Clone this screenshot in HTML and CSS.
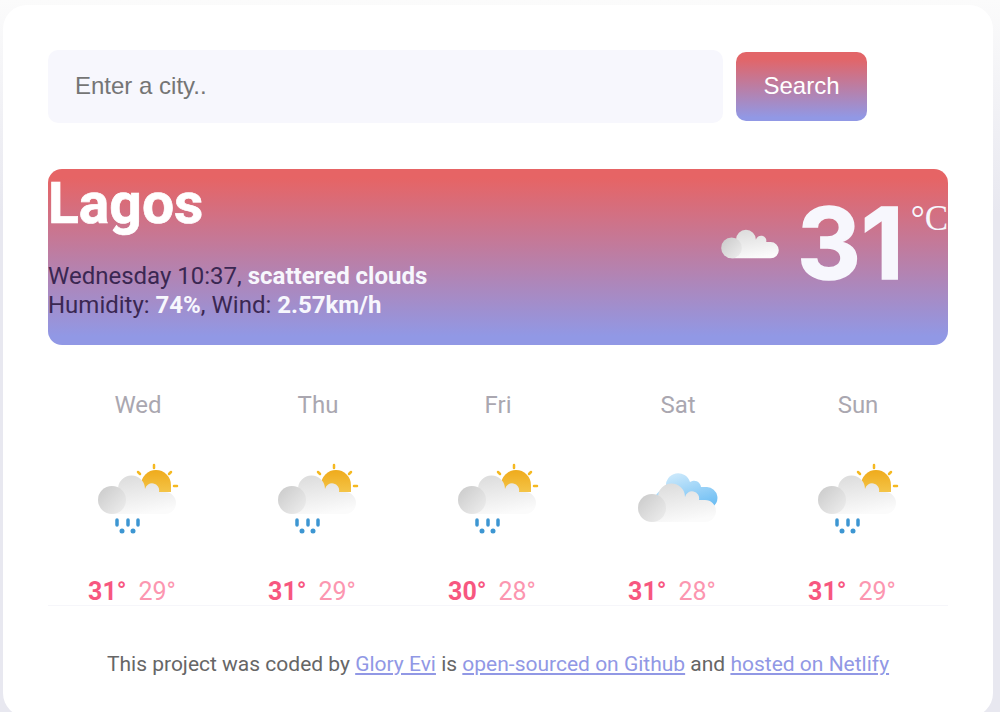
FILE: index.html
```html
<!DOCTYPE html>
<html lang="en">
<head>
<meta charset="utf-8">
<title>Weather</title>
<link rel="stylesheet" href="styles.css">
</head>
<body>
<svg class="defs" width="0" height="0" aria-hidden="true">
  <defs>
    <linearGradient id="cloudFill" x1="0.2" y1="0" x2="0.5" y2="1">
      <stop offset="0" stop-color="#dcdcdc"/><stop offset="1" stop-color="#fbfbfb"/>
    </linearGradient>
    <linearGradient id="puffFill" x1="0" y1="0" x2="1" y2="1">
      <stop offset="0" stop-color="#c9c9c9"/><stop offset="1" stop-color="#efefef"/>
    </linearGradient>
    <linearGradient id="sunFill" x1="0" y1="0" x2="0" y2="1">
      <stop offset="0" stop-color="#efab1c"/><stop offset="1" stop-color="#f4c447"/>
    </linearGradient>
    <linearGradient id="skyFill" x1="0.2" y1="0" x2="0.8" y2="1">
      <stop offset="0" stop-color="#d3ecfc"/><stop offset="1" stop-color="#6cbdf3"/>
    </linearGradient>
    <symbol id="cloud" viewBox="0 10 84 44">
      <path d="M17 52H70A11 11 0 0 0 70 30H64A7 7 0 0 0 50 27A13.500 13.500 0 0 0 23 27L17 52Z" fill="url(#cloudFill)"/>
      <circle cx="17" cy="38" r="14" fill="url(#puffFill)"/>
    </symbol>
    <symbol id="rainy" viewBox="0 0 84 76">
      <g stroke="#f5b921" stroke-width="2.500" stroke-linecap="round">
        <path d="M59 3V6"/><path d="M43 10L45 12"/><path d="M76 10L74 12"/><path d="M79 24H82"/>
      </g>
      <path d="M46 23A15 15 0 0 1 76 23V30H46Z" fill="url(#sunFill)"/>
      <path d="M17 52H70A11 11 0 0 0 70 30H64A7 7 0 0 0 50 27A13.500 13.500 0 0 0 23 27L17 52Z" fill="url(#cloudFill)"/>
      <circle cx="17" cy="38" r="14" fill="url(#puffFill)"/>
      <g stroke="#3d96d2" stroke-width="3.500" stroke-linecap="round">
        <path d="M22 58V63"/><path d="M33 58V63"/><path d="M43 58V63"/>
      </g>
      <circle cx="27" cy="69" r="2.500" fill="#3d96d2"/><circle cx="38" cy="69" r="2.500" fill="#3d96d2"/>
    </symbol>
    <symbol id="overcast" viewBox="0 0 84 76">
      <path d="M17 44C18 34 24 28 31 25A12.300 12.300 0 0 1 55 20A7 7 0 0 1 66 25H72A11 11 0 0 1 76 46Z" fill="url(#skyFill)"/>
      <g transform="translate(0 8)">
        <path d="M17 52H70A11 11 0 0 0 70 30H64A7 7 0 0 0 50 27A13.500 13.500 0 0 0 23 27L17 52Z" fill="url(#cloudFill)"/>
        <circle cx="17" cy="38" r="14" fill="url(#puffFill)"/>
      </g>
    </symbol>
  </defs>
</svg>
<main class="card">
  <form class="search">
    <input class="search-input" type="text" placeholder="Enter a city..">
    <button class="search-button" type="button">Search</button>
  </form>
  <section class="current">
    <div class="place">
      <h1 class="city">Lagos</h1>
      <p class="details">Wednesday 10:37, <strong>scattered clouds</strong><br>Humidity: <strong>74%</strong>, Wind: <strong>2.57km/h</strong></p>
    </div>
    <div class="reading">
      <svg class="now-icon"><use href="#cloud"/></svg>
      <span class="temp">31</span>
      <span class="unit">°C</span>
    </div>
  </section>
  <section class="forecast">
    <div class="day">
      <div class="day-name">Wed</div>
      <svg class="day-icon"><use href="#rainy"/></svg>
      <div class="temps"><strong class="high">31°</strong><span class="low">29°</span></div>
    </div>
    <div class="day">
      <div class="day-name">Thu</div>
      <svg class="day-icon"><use href="#rainy"/></svg>
      <div class="temps"><strong class="high">31°</strong><span class="low">29°</span></div>
    </div>
    <div class="day">
      <div class="day-name">Fri</div>
      <svg class="day-icon"><use href="#rainy"/></svg>
      <div class="temps"><strong class="high">30°</strong><span class="low">28°</span></div>
    </div>
    <div class="day">
      <div class="day-name">Sat</div>
      <svg class="day-icon"><use href="#overcast"/></svg>
      <div class="temps"><strong class="high">31°</strong><span class="low">28°</span></div>
    </div>
    <div class="day">
      <div class="day-name">Sun</div>
      <svg class="day-icon"><use href="#rainy"/></svg>
      <div class="temps"><strong class="high">31°</strong><span class="low">29°</span></div>
    </div>
  </section>
  <footer class="credits">This project was coded by <a href="#">Glory Evi</a> is <a href="#">open-sourced on Github</a> and <a href="#">hosted on Netlify</a></footer>
</main>
</body>
</html>
```
FILE: styles.css
```css
* { box-sizing: border-box; }
html, body { height: 712px; overflow: hidden; }
body {
  margin: 0;
  padding: 5px 7px 0 3px;
  font-family: Roboto, sans-serif;
  background: linear-gradient(180deg, #fbfbfb 0%, #e8e8f0 30%, #e8e8f0 100%);
}
.defs { position: absolute; }
.card {
  width: 990px;
  height: 712px;
  padding: 45px;
  background: #fff;
  border-radius: 24px;
}
.search { display: flex; align-items: center; gap: 13px; height: 73px; }
.search-input {
  width: 675px;
  height: 73px;
  padding: 0 27px 2px;
  border: 0;
  border-radius: 10px;
  background: #f7f7fd;
  font: 24px "Liberation Sans", sans-serif;
  outline: none;
}
.search-input::placeholder { color: #757575; opacity: 1; }
.search-button {
  width: 131px;
  height: 69px;
  padding: 0 0 2px;
  border: 0;
  border-radius: 10px;
  color: #fff;
  background: linear-gradient(180deg, #e26568 10%, #9198e5 95%);
  font: 24px "Liberation Sans", sans-serif;
}
.current {
  display: flex;
  justify-content: space-between;
  width: 900px;
  height: 176px;
  margin-top: 46px;
  border-radius: 14px;
  background: linear-gradient(180deg, #e66465 5%, #9198e5 95%);
}
.city {
  margin: 0;
  color: #fff;
  font-size: 57px;
  font-weight: 700;
  line-height: 70px;
  -webkit-text-stroke: 0.7px #fff;
}
.details {
  margin: 23px 0 0;
  color: #3a2752;
  font-size: 24px;
  line-height: 29px;
}
.details strong { color: #f7f7fd; }
.reading { display: flex; align-items: flex-start; }
.now-icon { filter: blur(0.5px); width: 62px; height: 33px; margin-top: 58px; margin-right: 16px; }
.temp {
  color: #f7f7fd;
  font-family: Inter, sans-serif;
  font-size: 99px;
  font-weight: 700;
  line-height: 148px;
  -webkit-text-stroke: 1.5px #f7f7fd;
}
.unit {
  margin-left: 7px;
  margin-top: 30px;
  color: #f7f7fd;
  font-family: "Liberation Serif", serif;
  font-size: 35px;
  line-height: 40px;
}
.forecast {
  display: grid;
  grid-template-columns: repeat(5, 180px);
  height: 261px;
  padding-top: 45px;
  border-bottom: 1px solid #f6f6fa;
}
.day { display: flex; flex-direction: column; align-items: center; }
.day-name { color: #aaa7b0; font-size: 24px; line-height: 30px; }
.day-icon { display: block; filter: blur(0.5px); width: 84px; height: 76px; margin-top: 42px; margin-right: 2px; }
.temps { display: flex; gap: 12px; margin-top: 40px; margin-right: 12px; font-size: 25px; line-height: 28px; }
.high { color: #f75780; }
.low { color: #fc96b0; }
.credits {
  margin-top: 43px;
  color: #666;
  font-size: 21px;
  line-height: 30px;
  text-align: center;
}
.credits a { color: #9198e5; }
```
